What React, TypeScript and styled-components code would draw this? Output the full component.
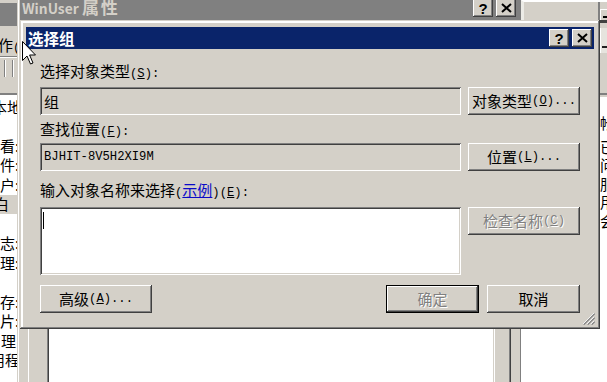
import React from "react";
import styled, { createGlobalStyle, css } from "styled-components";

const FACE = "#d4d0c8";
const CJK = `"Noto Sans CJK SC", "Noto Sans", sans-serif`;
const MONO = `"Liberation Mono", "DejaVu Sans Mono", monospace`;

const Global = createGlobalStyle`
  html, body { margin: 0; padding: 0; background: #fff; }
  body { font-family: ${CJK}; }
  * { box-sizing: border-box; }
`;

const raised = css`
  box-shadow: inset -1px -1px #404040, inset 1px 1px #ffffff,
    inset -2px -2px #808080, inset 2px 2px ${FACE};
`;
const sunken = css`
  box-shadow: inset 1px 1px #808080, inset -1px -1px #ffffff,
    inset 2px 2px #404040, inset -2px -2px ${FACE};
`;

const Desktop = styled.div`
  position: relative;
  width: 607px;
  height: 382px;
  overflow: hidden;
  background: #fff;
  font-family: ${CJK};
  font-size: 15px;
  color: #000;
`;

const Lat = styled.span`
  font-family: ${MONO};
  font-size: 12.2px;
`;

/* ---------- left background window ---------- */
const LeftWindow = styled.div`
  position: absolute;
  left: 0;
  top: 0;
  width: 17px;
  height: 382px;
  overflow: hidden;
  background: ${FACE};
  display: flex;
  flex-direction: column;
`;
const LeftTitle = styled.div`
  margin-top: 3px;
  height: 23px;
  flex: none;
  background: #808080;
`;
const LeftMenu = styled.div`
  height: 30px;
  flex: none;
  padding-top: 11px;
  line-height: 16px;
  white-space: nowrap;
  margin-left: -2px;
`;
const LeftToolbar = styled.div`
  height: 24px;
  flex: none;
  border-top: 1px solid #808080;
  box-shadow: inset 0 1px #fff;
  display: flex;
  gap: 6px;
  padding: 3px 0 3px 4px;
`;
const Etch = styled.div`
  width: 2px;
  border-left: 1px solid #808080;
  border-right: 1px solid #fff;
`;
const LeftGap = styled.div`
  height: 15px;
  flex: none;
  border-bottom: 2px solid #808080;
`;
const LeftList = styled.div`
  flex: 1;
  background: #fff;
  padding-top: 2px;
`;
const LeftRow = styled.div<{ $sel?: boolean }>`
  width: 17px;
  height: 19.5px;
  display: flex;
  align-items: center;
  white-space: nowrap;
  line-height: 16px;
  overflow: hidden;
  background: ${(p) => (p.$sel ? FACE : "transparent")};
`;
const RowText = styled.span<{ $x: number }>`
  margin-left: ${(p) => p.$x}px;
`;

/* ---------- WinUser background window ---------- */
const BackWindow = styled.div`
  position: absolute;
  left: 17px;
  top: -8px;
  width: 505px;
  height: 410px;
  background: ${FACE};
  box-shadow: inset -1px -1px #404040, inset 1px 1px ${FACE},
    inset -2px -2px #808080, inset 2px 2px #fff;
  padding: 4px 2px 0 3px;
  display: flex;
  flex-direction: column;
`;
const BackTitle = styled.div`
  height: 24px;
  flex: none;
  background: #808080;
  display: flex;
  align-items: flex-end;
  padding: 0 4px 3px 2px;
  color: ${FACE};
  font-weight: bold;
`;
const BackTitleText = styled.span`
  font-size: 17px;
  line-height: 18px;
  white-space: nowrap;
  letter-spacing: 2px;
  & > span {
    font-size: 13.8px;
    letter-spacing: 0;
  }
`;
const BackBody = styled.div`
  flex: 1;
  display: flex;
  flex-direction: column;
  padding: 40px 9px 0 8px;
`;
const TabPage = styled.div`
  flex: 1;
  border-left: 1px solid #fff;
  border-right: 1px solid #404040;
  box-shadow: inset -1px 0 #808080;
  padding: 30px 15px 0 18px;
  display: flex;
  flex-direction: column;
`;
const ListBox = styled.div`
  flex: 1;
  background: #fff;
  ${sunken};
`;

/* ---------- right background window ---------- */
const RightWindow = styled.div`
  position: absolute;
  left: 521px;
  top: 0;
  width: 86px;
  height: 382px;
  overflow: hidden;
  background: #fff;
  display: flex;
  flex-direction: column;
`;
const RightHeader = styled.div`
  height: 97px;
  flex: none;
  background: ${FACE};
  border-top: 2px solid #fff;
  border-left: 3px solid #ecebe6;
  display: flex;
  justify-content: flex-end;
`;
const RightDivider = styled.div`
  width: 2px;
  background: #808080;
`;
const RightTools = styled.div`
  width: 7px;
  display: flex;
  flex-direction: column;
  padding-top: 7px;
`;
const MiniButton = styled.div`
  height: 11px;
  background: ${FACE};
  border-top: 1px solid #fff;
  border-left: 1px solid #fff;
  display: flex;
  align-items: flex-end;
  padding: 0 0 2px 2px;
  &::after {
    content: "";
    width: 5px;
    height: 2px;
    background: #000;
  }
`;
const DarkLine = styled.div`
  height: 3px;
  background: #404040;
`;
const ToolBox = styled.div`
  margin-top: 5px;
  height: 25px;
  background: #e6e4de;
  border-left: 1px solid #fff;
  display: flex;
  align-items: flex-end;
  padding: 0 0 5px 1px;
  &::after {
    content: "";
    width: 6px;
    height: 2px;
    background: #202020;
  }
`;
const ToolBottom = styled.div`
  margin-top: auto;
  margin-bottom: 2px;
  height: 2px;
  background: #808080;
`;
const RightList = styled.div`
  flex: 1;
  padding: 17px 0 0 79px;
  white-space: nowrap;
`;
const RightRow = styled.div<{ $gap?: number }>`
  height: 18.5px;
  line-height: 16px;
  display: flex;
  align-items: center;
  margin-bottom: ${(p) => p.$gap ?? 0}px;
`;

/* ---------- dialog ---------- */
const Dialog = styled.div`
  position: absolute;
  left: 20px;
  top: 20px;
  width: 580px;
  height: 309px;
  padding: 7px 6px 6px 6px;
  background: ${FACE};
  box-shadow: inset -1px -1px #404040, inset 1px 1px ${FACE},
    inset -2px -2px #808080, inset 3px 3px #fff;
  display: flex;
  flex-direction: column;
`;
const TitleBar = styled.div`
  height: 22px;
  flex: none;
  background: #0a246a;
  display: flex;
  align-items: center;
  padding: 0 2px;
  color: #fff;
`;
const TitleText = styled.span`
  font-weight: bold;
  font-size: 15.5px;
  line-height: 18px;
`;
const CaptionButtons = styled.div`
  margin-left: auto;
  display: flex;
  gap: 3px;
`;
const CaptionButton = styled.div`
  width: 20px;
  height: 18px;
  background: ${FACE};
  ${raised};
  display: flex;
  align-items: center;
  justify-content: center;
  color: #000;
  font-family: "Liberation Sans", Arial, sans-serif;
  font-weight: bold;
  font-size: 15px;
  line-height: 15px;
`;
const Body = styled.div`
  flex: 1;
  display: flex;
  flex-direction: column;
  padding: 0 14px;
`;
const Label = styled.div<{ $mt: number }>`
  height: 16px;
  line-height: 16px;
  white-space: nowrap;
  margin-top: ${(p) => p.$mt}px;
`;
const Link = styled.span`
  color: #0a0ac8;
  text-decoration: underline;
`;
const Row = styled.div<{ $mt: number }>`
  display: grid;
  grid-template-columns: 421px 112px;
  column-gap: 7px;
  align-items: start;
  margin-top: ${(p) => p.$mt}px;
`;
const Field = styled.div<{ $white?: boolean; $h?: number }>`
  height: ${(p) => p.$h ?? 28}px;
  background: ${(p) => (p.$white ? "#fff" : FACE)};
  ${sunken};
  display: flex;
  align-items: ${(p) => (p.$white ? "flex-start" : "center")};
  padding-left: 4px;
  white-space: nowrap;
`;
const Caret = styled.span`
  display: block;
  width: 1px;
  height: 17px;
  margin: 5px 0 0 -1px;
  background: #000;
`;
const Button = styled.div<{ $disabled?: boolean; $default?: boolean; $w?: number }>`
  height: 28px;
  width: ${(p) => (p.$w ? `${p.$w}px` : "auto")};
  background: ${FACE};
  display: flex;
  align-items: center;
  justify-content: center;
  white-space: nowrap;
  line-height: 16px;
  ${(p) =>
    p.$default
      ? css`
          box-shadow: inset 0 0 0 1px #000, inset -2px -2px #404040,
            inset 2px 2px #fff, inset -3px -3px #808080,
            inset 3px 3px ${FACE};
        `
      : raised};
  color: ${(p) => (p.$disabled ? "#808080" : "#000")};
  text-shadow: ${(p) => (p.$disabled ? "1px 1px #fff" : "none")};
`;
const BottomRow = styled.div`
  display: flex;
  gap: 8px;
  margin-top: 10px;
`;
const Spacer = styled.div`
  flex: 1;
`;
const Grip = styled.svg`
  position: absolute;
  right: 5px;
  bottom: 4px;
`;
const Cursor = styled.svg`
  position: absolute;
  left: 22px;
  top: 41px;
`;

const leftRows: { t: string; x: number; sel?: boolean }[] = [
  { t: "本地", x: -8 },
  { t: "", x: 0 },
  { t: "看:", x: 0 },
  { t: "件:", x: 0 },
  { t: "户:", x: 0 },
  { t: "白", x: -6, sel: true },
  { t: "", x: 0 },
  { t: "志:", x: 0 },
  { t: "理:", x: 0 },
  { t: "", x: 0 },
  { t: "存:", x: 0 },
  { t: "片:", x: 0 },
  { t: "理", x: 1 },
  { t: "用程", x: -10 },
];

const rightRows = ["帐", "已", "问", "服", "用", "会"];

export default function App() {
  return (
    <>
      <Global />
      <Desktop>
        <LeftWindow>
          <LeftTitle />
          <LeftMenu>
            作<Lat>(</Lat>
          </LeftMenu>
          <LeftToolbar>
            <Etch />
            <Etch />
          </LeftToolbar>
          <LeftGap />
          <LeftList>
            {leftRows.map((r, i) => (
              <LeftRow key={i} $sel={r.sel}>
                <RowText $x={r.x}>{r.t}</RowText>
              </LeftRow>
            ))}
          </LeftList>
        </LeftWindow>

        <BackWindow>
          <BackTitle>
            <BackTitleText>
              <span>WinUser </span>属性
            </BackTitleText>
            <CaptionButtons>
              <CaptionButton>?</CaptionButton>
              <CaptionButton>
                <svg width="11" height="10" viewBox="0 0 11 10">
                  <path d="M1 1 L10 9 M10 1 L1 9" stroke="#000" strokeWidth="2" />
                </svg>
              </CaptionButton>
            </CaptionButtons>
          </BackTitle>
          <BackBody>
            <TabPage>
              <ListBox />
            </TabPage>
          </BackBody>
        </BackWindow>

        <RightWindow>
          <RightHeader>
            <RightDivider />
            <RightTools>
              <MiniButton />
              <DarkLine />
              <ToolBox />
              <ToolBottom />
            </RightTools>
          </RightHeader>
          <RightList>
            {rightRows.map((t, i) => (
              <RightRow key={i} $gap={i === 0 ? 5 : 0}>
                {t}
              </RightRow>
            ))}
          </RightList>
        </RightWindow>

        <Dialog>
          <TitleBar>
            <TitleText>选择组</TitleText>
            <CaptionButtons>
              <CaptionButton>?</CaptionButton>
              <CaptionButton>
                <svg width="11" height="10" viewBox="0 0 11 10">
                  <path d="M1 1 L10 9 M10 1 L1 9" stroke="#000" strokeWidth="2" />
                </svg>
              </CaptionButton>
            </CaptionButtons>
          </TitleBar>
          <Body>
            <Label $mt={14}>
              选择对象类型<Lat>(<u>S</u>):</Lat>
            </Label>
            <Row $mt={8}>
              <Field>组</Field>
              <Button>
                对象类型<Lat>(<u>O</u>)...</Lat>
              </Button>
            </Row>
            <Label $mt={6}>
              查找位置<Lat>(<u>F</u>):</Lat>
            </Label>
            <Row $mt={6}>
              <Field>
                <Lat>BJHIT-8V5H2XI9M</Lat>
              </Field>
              <Button>
                位置<Lat>(<u>L</u>)...</Lat>
              </Button>
            </Row>
            <Label $mt={11}>
              输入对象名称来选择<Lat>(</Lat>
              <Link>示例</Link>
              <Lat>
                )(<u>E</u>):
              </Lat>
            </Label>
            <Row $mt={9}>
              <Field $white $h={68}>
                <Caret />
              </Field>
              <Button $disabled>
                检查名称<Lat>(<u>C</u>)</Lat>
              </Button>
            </Row>
            <BottomRow>
              <Button $w={112}>
                高级<Lat>(<u>A</u>)...</Lat>
              </Button>
              <Spacer />
              <Button $w={93} $default $disabled>
                确定
              </Button>
              <Button $w={93}>取消</Button>
            </BottomRow>
          </Body>
          <Grip width="13" height="14" viewBox="0 0 13 14">
            <path d="M12 2 L1 13 M12 6 L5 13 M12 10 L9 13" stroke="#fff" strokeWidth="1" />
            <path d="M12.7 2.7 L1.7 13.7 M12.7 6.7 L5.7 13.7 M12.7 10.7 L9.7 13.7" stroke="#808080" strokeWidth="1.2" />
          </Grip>
        </Dialog>

        <Cursor width="15" height="25" viewBox="0 0 15 25">
          <path
            d="M0.5 0.5 L0.5 19.5 L5 15 L8.5 23 L11 22 L7.6 14 L13.5 14 Z"
            fill="#fff"
            stroke="#000"
            strokeWidth="1"
            strokeLinejoin="miter"
          />
        </Cursor>
      </Desktop>
    </>
  );
}
